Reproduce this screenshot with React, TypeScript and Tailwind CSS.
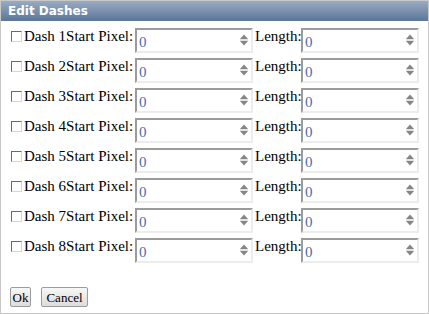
import React from 'react';

const serif = { fontFamily: '"Liberation Serif", "Times New Roman", serif' };

const Spinner: React.FC = () => (
  <svg width="10" height="12" viewBox="0 0 10 12" className="shrink-0">
    <polygon points="5,0.5 1,5 9,5" fill="#858585" />
    <line x1="1" y1="6" x2="9" y2="6" stroke="#c8c8c8" strokeWidth="1" />
    <polygon points="1,7 9,7 5,11.5" fill="#858585" />
  </svg>
);

const NumberBox: React.FC<{ value: number }> = ({ value }) => (
  <div className="flex h-[25px] w-[118px] shrink-0 items-start border-2 border-t-[#9b9b9b] border-l-[#9b9b9b] border-r-[#ececec] border-b-[#ececec] bg-white">
    <span className="flex-1 pl-[2px] pt-[4px] text-[15px] leading-[17px] text-[#4a6cb0]">{value}</span>
    <div className="mr-[2px] mt-[4px]">
      <Spinner />
    </div>
  </div>
);

const CheckBox: React.FC = () => (
  <div className="ml-[1px] mt-[3px] h-[11px] w-[11px] shrink-0 border border-t-[#6a6a6a] border-l-[#6a6a6a] border-r-[#d6d6d6] border-b-[#d6d6d6] bg-white" />
);

const App: React.FC = () => {
  const dashes = [1, 2, 3, 4, 5, 6, 7, 8];

  return (
    <div className="h-[314px] w-[429px] overflow-hidden border border-[#c9c9c9] bg-white" style={serif}>
      <div
        className="flex h-[20px] items-center bg-linear-to-b from-[#9aabc2] to-[#5b7699] px-[7px] text-[12px] font-bold text-white"
        style={{ fontFamily: '"DejaVu Sans", Verdana, sans-serif' }}
      >
        Edit Dashes
      </div>

      <div className="flex flex-col gap-[5px] pl-[9px] pt-[7px]">
        {dashes.map((n) => (
          <div key={n} className="flex h-[25px] items-start text-[15px] leading-[17px] text-black">
            <CheckBox />
            <span className="ml-[2px] w-[111px] shrink-0 whitespace-nowrap">Dash {n}Start Pixel:</span>
            <NumberBox value={0} />
            <span className="ml-[2px] w-[46px] shrink-0 whitespace-nowrap">Length:</span>
            <NumberBox value={0} />
          </div>
        ))}
      </div>

      <div className="mt-[24px] flex gap-[10px] pl-[9px]">
        <button className="flex h-[20px] w-[21px] items-center justify-center rounded-[2px] border border-[#9c9c9c] bg-linear-to-b from-[#f7f7f7] to-[#dcdcdc] text-[13px] leading-none text-black">
          Ok
        </button>
        <button className="flex h-[20px] w-[47px] items-center justify-center rounded-[2px] border border-[#9c9c9c] bg-linear-to-b from-[#f7f7f7] to-[#dcdcdc] text-[13px] leading-none text-black">
          Cancel
        </button>
      </div>
    </div>
  );
};

export default App;
